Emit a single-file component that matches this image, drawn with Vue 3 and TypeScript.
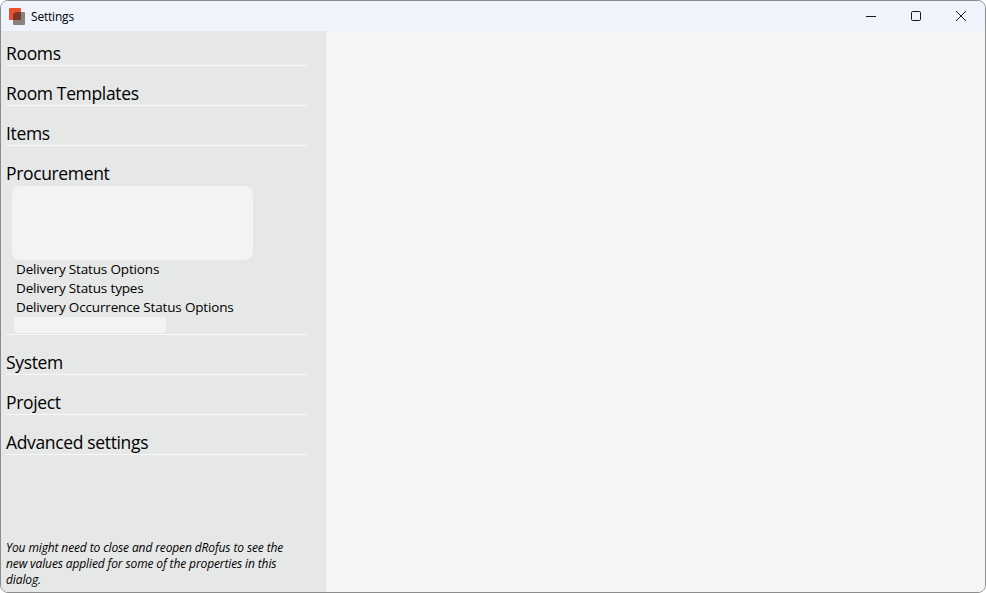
<script setup lang="ts">
interface Section {
  title: string
  items?: string[]
}

const sections: Section[] = [
  { title: 'Rooms' },
  { title: 'Room Templates' },
  { title: 'Items' },
  {
    title: 'Procurement',
    items: ['Delivery Status Options', 'Delivery Status types', 'Delivery Occurrence Status Options'],
  },
  { title: 'System' },
  { title: 'Project' },
  { title: 'Advanced settings' },
]
</script>

<template>
  <div class="window">
    <header class="titlebar">
      <svg class="logo" width="18" height="18" viewBox="0 0 18 18">
        <rect x="4" y="5" width="12" height="13" rx="1" fill="#858280" />
        <rect x="0" y="1" width="12" height="12" rx="1" fill="#e9502f" />
        <path d="M4 9a4 4 0 0 1 4-4h4v7a1 1 0 0 1-1 1H4z" fill="#7a3626" />
      </svg>
      <span class="title">Settings</span>
      <div class="controls">
        <button class="control" aria-label="Minimize">
          <svg width="12" height="12" viewBox="0 0 12 12"><path d="M1 6.5h10" stroke="#1a1a1a" fill="none" /></svg>
        </button>
        <button class="control" aria-label="Maximize">
          <svg width="12" height="12" viewBox="0 0 12 12"><rect x="1.5" y="1.5" width="9" height="9" rx="1.2" stroke="#1a1a1a" fill="none" /></svg>
        </button>
        <button class="control" aria-label="Close">
          <svg width="12" height="12" viewBox="0 0 12 12"><path d="M1 1l10 10M11 1L1 11" stroke="#1a1a1a" fill="none" /></svg>
        </button>
      </div>
    </header>
    <div class="body">
      <aside class="sidebar">
        <nav class="sections">
          <section v-for="s in sections" :key="s.title" class="section">
            <h2 class="heading">{{ s.title }}</h2>
            <div v-if="s.items" class="panel">
              <div class="blank-large"></div>
              <div v-for="item in s.items" :key="item" class="item">{{ item }}</div>
              <div class="blank-small"></div>
            </div>
          </section>
        </nav>
        <p class="note">You might need to close and reopen dRofus to see the new values applied for some of the properties in this dialog.</p>
      </aside>
      <main class="content"></main>
    </div>
  </div>
</template>

<style>
html, body { margin: 0; background: #ffffff; }
</style>

<style scoped>
.window {
  width: 986px;
  height: 593px;
  box-sizing: border-box;
  display: flex;
  flex-direction: column;
  border: 1px solid #8c8c8c;
  border-radius: 8px;
  overflow: hidden;
  font-family: "Open Sans", "Noto Sans", sans-serif;
  color: #000000;
}
.titlebar {
  height: 30px;
  flex: none;
  display: flex;
  align-items: center;
  background: #eff4fc;
}
.logo { margin-left: 8px; }
.title { margin-left: 4px; font-size: 12px; letter-spacing: -0.2px; }
.controls { margin-left: auto; margin-right: 2px; display: flex; margin-top: -1px; }
.control {
  width: 45px;
  height: 30px;
  padding: 0;
  border: 0;
  background: transparent;
  display: flex;
  align-items: center;
  justify-content: center;
}
.body { flex: 1; display: flex; min-height: 0; }
.sidebar {
  width: 325px;
  flex: none;
  display: flex;
  flex-direction: column;
  background: #e6e7e7;
}
.sections { flex: 1; padding: 10px 19px 0 5px; }
.section { border-bottom: 1px solid #f6f7f7; margin-bottom: 15px; }
.heading {
  margin: 0;
  height: 24px;
  font-size: 17.5px;
  font-weight: 400;
  line-height: 24px;
  letter-spacing: -0.35px;
}
.section:has(.panel) .heading { height: 25px; }
.panel { padding-bottom: 1px; }
.blank-large {
  width: 241px;
  height: 74px;
  margin-left: 6px;
  border-radius: 8px;
  background: #f2f4f3;
}
.item {
  height: 19px;
  padding-left: 10px;
  font-size: 13.5px;
  line-height: 19px;
  letter-spacing: -0.16px;
}
.blank-small {
  width: 152px;
  height: 16px;
  margin-left: 8px;
  border-radius: 3px;
  background: #f2f4f3;
}
.note {
  margin: 0;
  padding: 0 36px 4px 5px;
  font-size: 12px;
  font-style: italic;
  line-height: 16px;
  letter-spacing: -0.12px;
}
.content { flex: 1; background: #f5f5f5; }
</style>
